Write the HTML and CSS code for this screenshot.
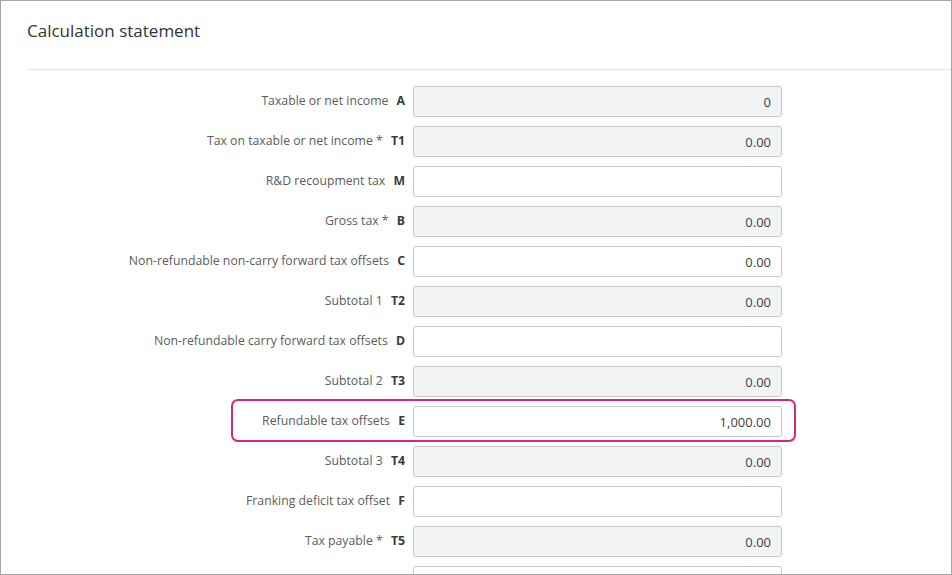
FILE: index.html
```html
<!DOCTYPE html>
<html lang="en">
<head>
  <meta charset="UTF-8" />
  <title>Calculation statement</title>
  <link rel="stylesheet" href="styles.css">
</head>
<body>
  <div class="panel">
    <div class="panel-head">
      <h2>Calculation statement</h2>
    </div>

    <div class="calc-form">
      <div class="row">
        <label>Taxable or net income <b>A</b></label>
        <input class="field readonly" value="0" readonly>
      </div>
      <div class="row">
        <label>Tax on taxable or net income * <b>T1</b></label>
        <input class="field readonly" value="0.00" readonly>
      </div>
      <div class="row">
        <label>R&amp;D recoupment tax <b>M</b></label>
        <input class="field" value="">
      </div>
      <div class="row">
        <label>Gross tax * <b>B</b></label>
        <input class="field readonly" value="0.00" readonly>
      </div>
      <div class="row">
        <label>Non-refundable non-carry forward tax offsets <b>C</b></label>
        <input class="field" value="0.00">
      </div>
      <div class="row">
        <label>Subtotal 1 <b>T2</b></label>
        <input class="field readonly" value="0.00" readonly>
      </div>
      <div class="row">
        <label>Non-refundable carry forward tax offsets <b>D</b></label>
        <input class="field" value="">
      </div>
      <div class="row">
        <label>Subtotal 2 <b>T3</b></label>
        <input class="field readonly" value="0.00" readonly>
      </div>
      <div class="row highlight">
        <label>Refundable tax offsets <b>E</b></label>
        <input class="field" value="1,000.00">
      </div>
      <div class="row">
        <label>Subtotal 3 <b>T4</b></label>
        <input class="field readonly" value="0.00" readonly>
      </div>
      <div class="row">
        <label>Franking deficit tax offset <b>F</b></label>
        <input class="field" value="">
      </div>
      <div class="row">
        <label>Tax payable * <b>T5</b></label>
        <input class="field readonly" value="0.00" readonly>
      </div>
      <div class="row">
        <label></label>
        <input class="field" value="">
      </div>
    </div>
  </div>
</body>
</html>
```

FILE: styles.css
```css
html, body {
  margin: 0;
  height: 100%;
}

body {
  font-family: "Open Sans", "Noto Sans", sans-serif;
  background: #fff;
  color: #333;
  border: 1px solid #a5a5a5;
  box-sizing: border-box;
  overflow: hidden;
}

.panel-head {
  margin-left: 26px;
  padding: 18px 0 0;
  height: 50px;
  border-bottom: 1px solid #e3e3e3;
}

.panel-head h2 {
  margin: 0;
  font-size: 17px;
  font-weight: 400;
  color: #333;
  line-height: 24px;
}

.calc-form {
  padding-top: 16px;
  display: flex;
  flex-direction: column;
  gap: 9px;
}

.row {
  display: flex;
  align-items: center;
  gap: 8px;
  position: relative;
}

.row label {
  width: 404px;
  text-align: right;
  font-size: 12.25px;
  line-height: 16px;
  margin-top: -2px;
  color: #5c5c5c;
}

.row label b {
  margin-left: 5px;
  color: #3a3a3a;
  font-weight: 700;
}

.field {
  width: 369px;
  height: 31px;
  box-sizing: border-box;
  border: 1px solid #c9c9c9;
  border-radius: 3px;
  padding: 0 10px;
  font-family: inherit;
  font-size: 13px;
  color: #3d3d3d;
  text-align: right;
  background: #fff;
  outline: none;
}

.field.readonly {
  background: #f2f3f4;
}

.row.highlight::before {
  content: "";
  position: absolute;
  left: 230px;
  width: 561px;
  top: -7px;
  bottom: -5px;
  border: 2px solid #d3287e;
  border-radius: 7px;
  pointer-events: none;
}
```
